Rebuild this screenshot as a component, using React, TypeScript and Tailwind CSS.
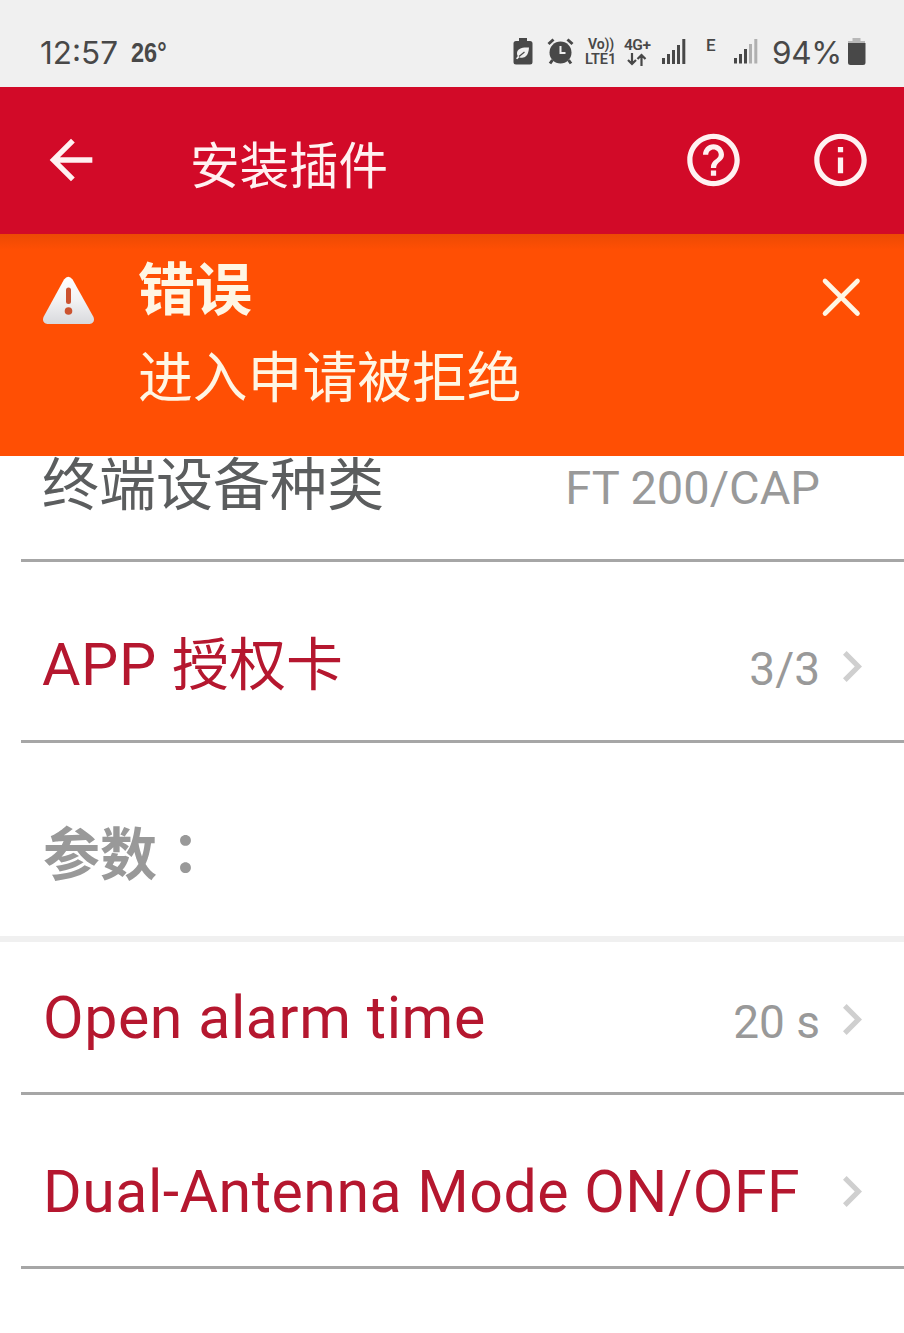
import React from "react";

const CJK = "font-[Roboto,'Noto_Sans_CJK_SC',sans-serif]";

function StatusBar() {
  return (
    <div className="flex h-[87px] shrink-0 items-start bg-[#f0f0f0] text-[#484848]">
      <span className="ml-[40px] mt-[37px] w-[91px] whitespace-nowrap font-[Inter,sans-serif] text-[31.500px] font-normal leading-none tracking-[0px]">
        12:57
      </span>
      <span className="mt-[39px] origin-left scale-x-[0.84] whitespace-nowrap font-['Liberation_Sans',sans-serif] text-[28px] font-bold leading-none">
        26°
      </span>
      <div className="flex-1" />
      <svg className="mr-[14px] mt-[38px] h-[27px] w-[20px]" viewBox="0 0 20 27">
        <path d="M6 0h8v3h3a2.500 2.500 0 0 1 2.500 2.500v18.500a2.500 2.500 0 0 1-2.500 2.500H3a2.500 2.500 0 0 1-2.500-2.500V5.500A2.500 2.500 0 0 1 3 3h3z" fill="#484848" />
        <path d="M16 9.500c-7-.5-12 1-12 6 0 1 .3 2 .8 2.600L3 20.500l1.300.7 2-2c4 1.500 9.200.2 9.700-9.700z" fill="#f0f0f0" />
        <path d="M6 18.500l5.500-4.500" stroke="#484848" strokeWidth="1.200" />
      </svg>
      <svg className="mr-[11px] mt-[38px] h-[27px] w-[27px]" viewBox="0 0 27 27">
        <circle cx="13.500" cy="14.500" r="11" fill="#484848" />
        <path d="M1.500 6L6.500 1.500M25.500 6l-5-4.500M5.500 22l-2.500 3.500M21.500 22l2.500 3.500" stroke="#484848" strokeWidth="3" />
        <path d="M13.500 8v7h5" fill="none" stroke="#f0f0f0" strokeWidth="2" />
      </svg>
      <div className="mr-[7px] mt-[37px] w-[32px] whitespace-nowrap font-[Roboto,sans-serif] font-semibold">
        <div className="h-[14px] pl-[3px] text-[14px] leading-[15px] tracking-[-0.1px]">Vo))</div>
        <div className="h-[16px] text-[14.500px] leading-[17px] tracking-[-0.1px]">LTE1</div>
      </div>
      <div className="mr-[10px] mt-[38px] w-[28px] whitespace-nowrap font-[Roboto,sans-serif] text-[15.500px] font-semibold leading-[15px] tracking-[-0.5px]">
        4G+
        <svg className="ml-[3px] h-[13px] w-[20px]" viewBox="0 0 20 13">
          <path d="M5 0v11M1 7l4 4 4-4M14.500 13V2M10.500 6l4-4 4 4" fill="none" stroke="#484848" strokeWidth="2.200" />
        </svg>
      </div>
      <svg className="mt-[39px] h-[26px] w-[24px]" viewBox="0 0 24 26">
        <path d="M1.500 19v6M6.500 15v10M11.500 11v14M16.500 6v19M21.800 0v25" stroke="#484848" strokeWidth="3" />
      </svg>
      <span className="ml-[20px] mt-[37px] w-[11px] font-[Roboto,sans-serif] text-[17px] font-medium leading-none">E</span>
      <svg className="ml-[17px] mt-[39px] h-[26px] w-[24px]" viewBox="0 0 24 26">
        <path d="M1.500 19v5.500M6.500 15v9.500M11.500 10v14.500" stroke="#484848" strokeWidth="3" />
        <path d="M16.500 5v19.500M21.800 0v24.500" stroke="#b0b0b0" strokeWidth="3" />
      </svg>
      <span className="ml-[14px] mt-[37px] w-[75px] whitespace-nowrap font-[Inter,sans-serif] text-[31.500px] font-normal leading-none tracking-[-0.3px]">
        94%
      </span>
      <svg className="mr-[38px] mt-[38px] h-[28px] w-[19px]" viewBox="0 0 19 28">
        <path d="M5.500 0h8v3h4.500v3H1V3h4.500z" fill="#b8b8b8" />
        <path d="M1 5h17.500v19.500a2.500 2.500 0 0 1-2.500 2.500H3.500A2.500 2.500 0 0 1 1 24.500z" fill="#484848" />
      </svg>
    </div>
  );
}

function Header() {
  return (
    <div className="flex h-[147px] shrink-0 items-start bg-[#d20a28] text-[#fff1f1]">
      <svg className="ml-[39px] mt-[41px] h-[64px] w-[64px]" viewBox="0 0 24 24" fill="currentColor">
        <path d="M20 11H7.830l5.590-5.590L12 4l-8 8 8 8 1.410-1.410L7.830 13H20z" />
      </svg>
      <h1 className={`${CJK} ml-[87px] mt-[56px] flex-1 whitespace-nowrap text-[49.500px] font-normal leading-none`}>
        安装插件
      </h1>
      <svg className="mt-[41px] h-[64px] w-[63px]" viewBox="0 0 24 24" fill="currentColor">
        <path d="M11 18h2v-2h-2v2zm1-16C6.480 2 2 6.480 2 12s4.480 10 10 10 10-4.480 10-10S17.520 2 12 2zm0 18c-4.410 0-8-3.590-8-8s3.590-8 8-8 8 3.590 8 8-3.590 8-8 8zm0-14c-2.210 0-4 1.790-4 4h2c0-1.100.9-2 2-2s2 .9 2 2c0 2-3 1.750-3 5h2c0-2.250 3-2.500 3-5 0-2.210-1.790-4-4-4z" />
      </svg>
      <svg className="ml-[64px] mr-[32px] mt-[41px] h-[64px] w-[63px]" viewBox="0 0 24 24" fill="currentColor">
        <path d="M11 7h2v2h-2zm0 4h2v6h-2zm1-9C6.480 2 2 6.480 2 12s4.480 10 10 10 10-4.480 10-10S17.520 2 12 2zm0 18c-4.410 0-8-3.590-8-8s3.590-8 8-8 8 3.590 8 8-3.590 8-8 8z" />
      </svg>
    </div>
  );
}

function ErrorBanner() {
  return (
    <div className="flex h-[222px] shrink-0 items-start bg-[linear-gradient(to_bottom,#ec4a04_0px,#ff4f04_16px)] text-[#fff6e4]">
      <svg className="ml-[41px] mt-[41px] h-[50px] w-[55px]" viewBox="0 0 55 50">
        <defs>
          <linearGradient id="warn" x1="0" y1="0" x2="0" y2="1">
            <stop offset="0" stopColor="#fff" />
            <stop offset="0.500" stopColor="#f2f2f3" />
            <stop offset="1" stopColor="#d8d9dd" />
          </linearGradient>
        </defs>
        <path d="M23 4.500q4.300-5.500 8.600 0L52.500 42q2 6-4 7H6.500q-6-1-4-7z" fill="url(#warn)" />
        <path d="M27.500 15v11.500" stroke="#cc5330" strokeWidth="5" strokeLinecap="round" />
        <circle cx="27.500" cy="36" r="3.800" fill="#cc5330" />
      </svg>
      <div className={`${CJK} ml-[42px] mt-[28px] flex-1 whitespace-nowrap leading-none`}>
        <div className="text-[57px] font-bold leading-none">错误</div>
        <div className="mt-[32px] text-[54.800px] leading-none">进入申请被拒绝</div>
      </div>
      <svg className="mr-[43px] mt-[43px] h-[40px] w-[40px]" viewBox="0 0 40 40" fill="none" stroke="currentColor" strokeWidth="4.600" strokeLinecap="round">
        <path d="M4 4l32.500 32.500M36.500 4L4 36.500" />
      </svg>
    </div>
  );
}

function Chevron({ className }: { className: string }) {
  return (
    <svg className={`${className} ml-[23px] mr-[42px] h-[31px] w-[19px]`} viewBox="8.590 6 7.410 12" fill="#cfcfcf">
      <path d="M8.590 16.590L13.170 12 8.590 7.410 10 6l6 6-6 6z" />
    </svg>
  );
}

export default function App() {
  return (
    <div className={`${CJK} flex h-[1333px] w-[904px] flex-col overflow-hidden bg-white`}>
      <StatusBar />
      <Header />
      <ErrorBanner />

      <div className="ml-[21px] flex h-[106px] shrink-0 items-start border-b-[3px] border-[#a6a6a6] pl-[21px]">
        <span className="mt-[1px] flex-1 whitespace-nowrap text-[57px] leading-none text-[#5b5d5e]">终端设备种类</span>
        <span className="mr-[84px] mt-[8px] whitespace-nowrap text-[47px] leading-none text-[#999]">FT 200/CAP</span>
      </div>

      <div className="ml-[21px] flex h-[181px] shrink-0 items-start border-b-[3px] border-[#a6a6a6] pl-[21px]">
        <span className="mt-[73px] flex-1 whitespace-nowrap text-[59px] leading-none tracking-[0.6px] text-[#b5172f]">
          APP{" "}
          <span className="text-[57px] tracking-normal">授权卡</span>
        </span>
        <span className="mt-[84px] whitespace-nowrap text-[46px] leading-none text-[#999]">3/3</span>
        <Chevron className="mt-[89px]" />
      </div>

      <div className="flex h-[199px] shrink-0 items-start border-b-[6px] border-[#f0f0f0] pl-[43px]">
        <span className="mt-[84px] whitespace-nowrap text-[57px] font-bold leading-none text-[#999]">
          参数
          <span lang="zh-TW" className="font-[Roboto,'Noto_Sans_CJK_TC',sans-serif]">：</span>
        </span>
      </div>

      <div className="ml-[21px] flex h-[153px] shrink-0 items-start border-b-[3px] border-[#a6a6a6] pl-[22px]">
        <span className="mt-[46px] flex-1 whitespace-nowrap text-[59px] leading-none tracking-[0.6px] text-[#b5172f]">Open alarm time</span>
        <span className="mt-[57px] whitespace-nowrap text-[46px] leading-none text-[#999]">20 s</span>
        <Chevron className="mt-[62px]" />
      </div>

      <div className="ml-[21px] flex h-[174px] shrink-0 items-start border-b-[3px] border-[#a6a6a6] pl-[22px]">
        <span className="mt-[67px] flex-1 whitespace-nowrap text-[59px] leading-none tracking-[0.52px] text-[#b5172f]">Dual-Antenna Mode ON/OFF</span>
        <Chevron className="mt-[81px]" />
      </div>
    </div>
  );
}
